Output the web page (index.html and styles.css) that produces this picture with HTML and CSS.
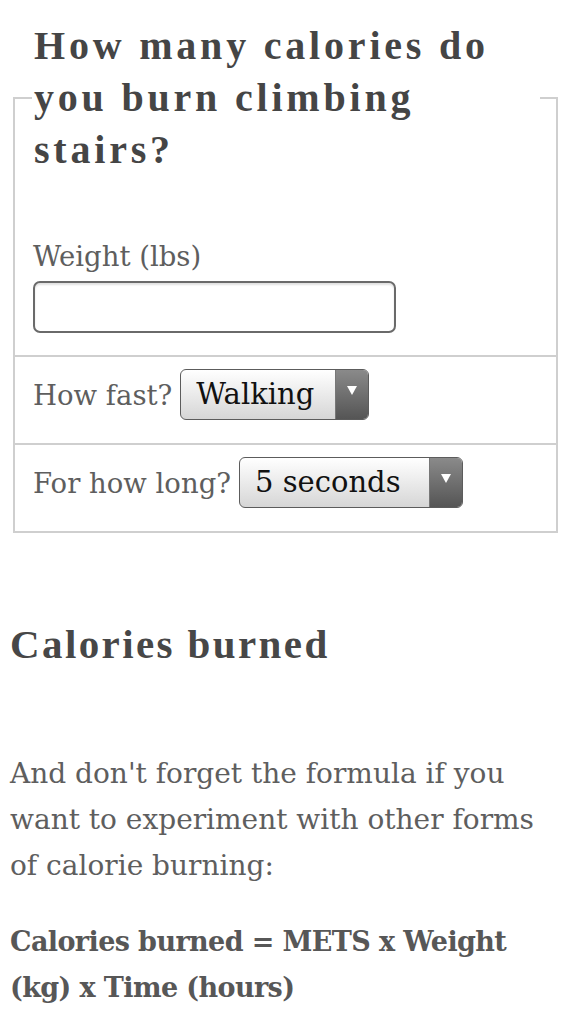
FILE: index.html
```html
<!DOCTYPE html>
<html>
<head>
<meta charset="utf-8">
<link rel="stylesheet" href="styles.css">
</head>
<body>
<fieldset class="calc">
  <legend class="calc-title">How many calories do you burn climbing stairs?</legend>
  <div class="row row-first">
    <div class="label">Weight (lbs)</div>
    <div class="text-input"></div>
  </div>
  <div class="row">
    <span class="label">How fast?</span>
    <span class="select sel-speed"><span class="sel-value">Walking</span><span class="sel-arrow"><span class="tri"></span></span></span>
  </div>
  <div class="row">
    <span class="label">For how long?</span>
    <span class="select sel-time"><span class="sel-value">5 seconds</span><span class="sel-arrow"><span class="tri"></span></span></span>
  </div>
</fieldset>
<h2 class="result-title">Calories burned</h2>
<p class="text">And don't forget the formula if you want to experiment with other forms of calorie burning:</p>
<p class="text formula">Calories burned = METS x Weight (kg) x Time (hours)</p>
</body>
</html>
```
FILE: styles.css
```css
html, body {
  margin: 0;
  padding: 0;
  background: #ffffff;
}
body {
  padding: 0 8px 0 10px;
  font-family: "DejaVu Serif", "Liberation Serif", serif;
  color: #5a5a5a;
}
.calc {
  margin: 20px 0 0 3px;
  padding: 0;
  border: 2px solid #cfcfcf;
  min-width: 0;
}
.calc-title {
  margin-left: 17px;
  padding: 0 2px;
  width: 508px;
  box-sizing: border-box;
  font-family: "Liberation Serif", serif;
  font-weight: bold;
  font-size: 40px;
  line-height: 52px;
  letter-spacing: 3.8px;
  color: #454545;
}
.row {
  padding: 12px 18px 23px;
  border-top: 2px solid #cfcfcf;
  font-size: 27.5px;
  line-height: 46px;
  display: flex;
  align-items: center;
  gap: 8px;
}
.row-first {
  border-top: none;
  display: block;
  padding: 57px 18px 22px;
}
.label {
  color: #5e5e5e;
}
.text-input {
  margin-top: 2px;
  width: 359px;
  height: 48px;
  border: 2px solid #6a6a6a;
  border-radius: 7px;
  background: #fff;
  box-shadow: inset 0 2px 2px rgba(0,0,0,0.12);
}
.select {
  display: inline-flex;
  height: 49px;
  border: 1.5px solid #5c5c5c;
  border-radius: 6px;
  overflow: hidden;
  background: linear-gradient(#ffffff, #d6d6d6);
  color: #111;
  font-size: 29px;
}
.sel-value {
  padding: 0 0 0 15px;
  line-height: 49px;
  flex: 1;
}
.sel-speed { width: 187px; }
.sel-time { width: 222px; }
.sel-arrow {
  width: 33px;
  display: flex;
  align-items: flex-start;
  justify-content: center;
  padding-top: 16px;
  box-sizing: border-box;
  background: linear-gradient(#8a8a8a, #555555);
  border-left: 1px solid #777;
}
.tri {
  width: 0;
  height: 0;
  border-left: 5px solid transparent;
  border-right: 5px solid transparent;
  border-top: 9px solid #ffffff;
}
.result-title {
  margin: 85px 0 0;
  font-family: "Liberation Serif", serif;
  font-weight: bold;
  font-size: 41px;
  line-height: 52px;
  letter-spacing: 2.4px;
  color: #474747;
}
.text {
  margin: 81px 0 0;
  font-size: 28px;
  line-height: 46px;
  color: #5e5e5e;
}
.formula {
  margin-top: 30px;
  font-size: 27px;
  letter-spacing: -0.6px;
  font-weight: bold;
  color: #575757;
}
```
